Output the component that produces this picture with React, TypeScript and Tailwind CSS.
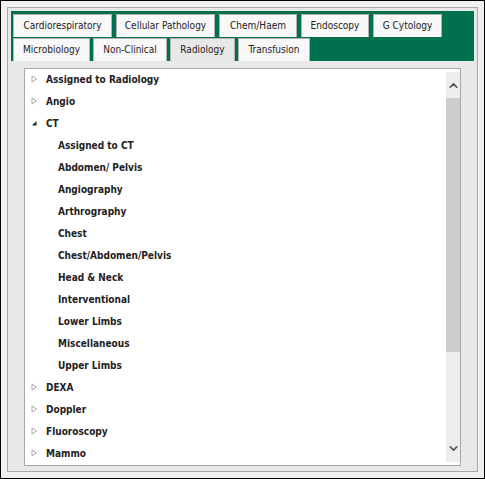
import { ChevronUp, ChevronDown } from 'lucide-react';

const topTabs = [
    { label: 'Cardiorespiratory', w: 'w-[99px]' },
    { label: 'Cellular Pathology', w: 'w-[99px]' },
    { label: 'Chem/Haem', w: 'w-[78px]' },
    { label: 'Endoscopy', w: 'w-[68px]' },
    { label: 'G Cytology', w: 'w-[69px]' },
];
const bottomTabs = [
    { label: 'Microbiology', w: 'w-[77px]' },
    { label: 'Non-Clinical', w: 'w-[74px]' },
    { label: 'Radiology', w: 'w-[65px]' },
    { label: 'Transfusion', w: 'w-[72px]' },
];

const ctChildren = [
    'Assigned to CT',
    'Abdomen/ Pelvis',
    'Angiography',
    'Arthrography',
    'Chest',
    'Chest/Abdomen/Pelvis',
    'Head & Neck',
    'Interventional',
    'Lower Limbs',
    'Miscellaneous',
    'Upper Limbs',
];

function Tab({ label, w, active }: { label: string; w: string; active?: boolean }) {
    return (
        <div
            className={`${w} h-[23px] text-center whitespace-nowrap text-[10px] leading-[22px] text-[#222] border border-[#b4b4b4] border-b-0 ${active ? 'bg-[#e8e8e8]' : 'bg-[#f8f8f8]'}`}
        >
            {label}
        </div>
    );
}

function Collapsed() {
    return (
        <svg width="7" height="8" viewBox="0 0 7 8" className="shrink-0">
            <path d="M1 1 L5.5 4 L1 7 Z" fill="none" stroke="#a9a9a9" strokeWidth="1" />
        </svg>
    );
}

function Expanded() {
    return (
        <svg width="7" height="8" viewBox="0 0 7 8" className="shrink-0">
            <path d="M1 6.5 L5.5 6.5 L5.5 2 Z" fill="#222" />
        </svg>
    );
}

function Node({ label, open }: { label: string; open?: boolean }) {
    return (
        <div className="h-[22px] flex items-center pl-[6px] gap-[8px]">
            {open ? <Expanded /> : <Collapsed />}
            <span>{label}</span>
        </div>
    );
}

export default function App() {
    return (
        <div
            className="w-[485px] h-[479px] border border-black bg-[#f0f0f0] p-[6px]"
            style={{ fontFamily: '"DejaVu Sans Condensed", "DejaVu Sans", Verdana, sans-serif' }}
        >
            <div className="h-full border border-[#a8a8a8] bg-[#e8e8e8] p-[3px] flex flex-col">
                {/* Tab strip */}
                <div className="bg-[#00704e] px-[2px] pt-[3px] flex flex-col gap-[1px]">
                    <div className="flex gap-[4px]">
                        {topTabs.map((t) => (
                            <Tab key={t.label} label={t.label} w={t.w} />
                        ))}
                    </div>
                    <div className="flex gap-[3px]">
                        {bottomTabs.map((t) => (
                            <Tab key={t.label} label={t.label} w={t.w} active={t.label === 'Radiology'} />
                        ))}
                    </div>
                </div>

                {/* Tree */}
                <div className="flex-1 px-[13px] pt-[7px] pb-[2px]">
                    <div className="h-full bg-white border border-[#a8a8a8] flex overflow-hidden">
                        <div className="flex-1 text-[10px] font-bold text-[#222] -mt-[1px]">
                            <Node label="Assigned to Radiology" />
                            <Node label="Angio" />
                            <Node label="CT" open />
                            {ctChildren.map((c) => (
                                <div key={c} className="h-[22px] flex items-center pl-[33px]">
                                    {c}
                                </div>
                            ))}
                            <Node label="DEXA" />
                            <Node label="Doppler" />
                            <Node label="Fluoroscopy" />
                            <Node label="Mammo" />
                        </div>
                        <div className="w-[14px] bg-[#ededed] flex flex-col items-center my-[3px]">
                            <ChevronUp size={13} strokeWidth={3} className="text-[#555] mt-[7px]" />
                            <div className="w-full bg-[#cdcdcd] h-[254px] mt-[6px]" />
                            <div className="flex-1" />
                            <ChevronDown size={13} strokeWidth={3} className="text-[#555] mb-[7px]" />
                        </div>
                    </div>
                </div>
            </div>
        </div>
    );
}
